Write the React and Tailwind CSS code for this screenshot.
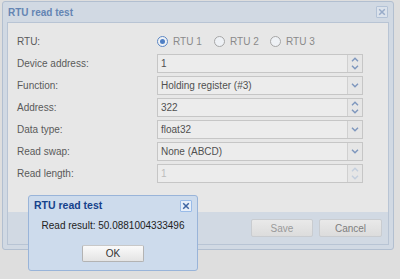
import React from 'react';

const Chevron = ({ up, color }) => (
  <svg width="8" height="5" viewBox="0 0 8 5">
    <path d={up ? 'M1 4.2 L4 1.2 L7 4.2' : 'M1 0.8 L4 3.8 L7 0.8'} fill="none" stroke={color} strokeWidth="1.4" />
  </svg>
);

const CloseBox = ({ dim }) => (
  <div
    className={`w-[12px] h-[12px] border flex items-center justify-center rounded-[1px] ${
      dim ? 'border-[#b3c2d6] bg-[#dbe2eb]' : 'border-[#99bbe8] bg-[#e6eef9]'
    }`}
  >
    <svg width="8" height="8" viewBox="0 0 8 8">
      <path d="M1.2 1.2 L6.8 6.8 M6.8 1.2 L1.2 6.8" stroke={dim ? '#98abc8' : '#3d64a3'} strokeWidth="1.5" />
    </svg>
  </div>
);

const Field = ({ value, trigger, disabled }) => (
  <div className="w-[206px] h-[19px] border border-[#c6c6c6] bg-[#ececec] flex">
    <div className={`flex-1 flex items-center pl-[3px] ${disabled ? 'text-[#bdbdbd]' : 'text-[#505050]'}`}>
      {value}
    </div>
    <div className="w-[15px] border-l border-[#d0d0d0] bg-[#e6e6e6] flex flex-col items-center justify-center gap-[3px]">
      {trigger === 'spin' ? (
        <>
          <Chevron up color={disabled ? '#c3cedd' : '#7d96bd'} />
          <Chevron color={disabled ? '#c3cedd' : '#7d96bd'} />
        </>
      ) : (
        <Chevron color="#7d96bd" />
      )}
    </div>
  </div>
);

const Radio = ({ label, checked, width }) => (
  <div className={`flex items-center gap-[5px] ${width}`}>
    <div
      className={`w-[11px] h-[11px] rounded-full border flex items-center justify-center bg-[#eef1f5] ${
        checked ? 'border-[#5d87c4]' : 'border-[#a6a6a6]'
      }`}
    >
      {checked && <div className="w-[5px] h-[5px] rounded-full bg-[#4f7fc4]" />}
    </div>
    <span className="text-[#8a8a8a]">{label}</span>
  </div>
);

const rows = [
  { label: 'Device address:', value: '1', trigger: 'spin' },
  { label: 'Function:', value: 'Holding register (#3)', trigger: 'combo' },
  { label: 'Address:', value: '322', trigger: 'spin' },
  { label: 'Data type:', value: 'float32', trigger: 'combo' },
  { label: 'Read swap:', value: 'None (ABCD)', trigger: 'combo' },
  { label: 'Read length:', value: '1', trigger: 'spin', disabled: true },
];

export default function App() {
  return (
    <div className="relative w-[400px] h-[279px] bg-[#dedede] overflow-hidden pt-[1px] pl-[2px] font-['Liberation_Sans',Arial,sans-serif] text-[10px]">
      {/* main window (masked) */}
      <div className="w-[392px] h-[249px] border border-[#b2bfd0] rounded-[3px] bg-[#d1d9e3] flex flex-col px-[4px] pb-[4px]">
        <div className="h-[20px] flex items-center justify-between pl-[1px] pr-[1px]">
          <span className="font-bold text-[10px] text-[#6585b3]">RTU read test</span>
          <CloseBox dim />
        </div>

        <div className="flex-1 border border-[#b8c4d4] flex flex-col">
          <div className="h-[189px] bg-[#e7e7e7] pt-[9px] pl-[9px] flex flex-col gap-[3px]">
            <div className="h-[19px] flex items-center">
              <span className="w-[140px] text-[#5a5a5a]">RTU:</span>
              <Radio label="RTU 1" checked width="w-[57px]" />
              <Radio label="RTU 2" width="w-[56px]" />
              <Radio label="RTU 3" width="w-[56px]" />
            </div>
            {rows.map(r => (
              <div key={r.label} className="h-[19px] flex items-center">
                <span className="w-[140px] text-[#5a5a5a]">{r.label}</span>
                <Field value={r.value} trigger={r.trigger} disabled={r.disabled} />
              </div>
            ))}
          </div>

          <div className="flex-1 flex items-center justify-end gap-[6px] pr-[6px]">
            <button className="w-[62px] h-[18px] border border-[#c9ccd0] rounded-[2px] bg-gradient-to-b from-[#e9e9e9] to-[#dcdcdc] text-[#9a9a9a]">
              Save
            </button>
            <button className="w-[63px] h-[18px] border border-[#c9ccd0] rounded-[2px] bg-gradient-to-b from-[#e9e9e9] to-[#dcdcdc] text-[#7e7e7e]">
              Cancel
            </button>
          </div>
        </div>
      </div>

      {/* message box */}
      <div className="absolute left-[28px] top-[195px] w-[170px] h-[76px] border border-[#99b4d9] rounded-[3px] bg-[#cddbec] flex flex-col">
        <div className="h-[16px] mt-[2px] flex items-center justify-between pl-[5px] pr-[5px]">
          <span className="font-bold text-[10.5px] text-[#15428b]">RTU read test</span>
          <CloseBox />
        </div>
        <div className="h-[14px] mt-[4px] flex items-center justify-center text-[#222]">
          Read result: 50.0881004333496
        </div>
        <div className="mt-[13px] flex justify-center">
          <button className="w-[62px] h-[17px] border border-[#b3b3b3] border-t-[#c8c8c8] border-t-dotted rounded-[2px] bg-gradient-to-b from-[#fafafa] to-[#e4e4e4] text-[#333]">
            OK
          </button>
        </div>
      </div>
    </div>
  );
}
